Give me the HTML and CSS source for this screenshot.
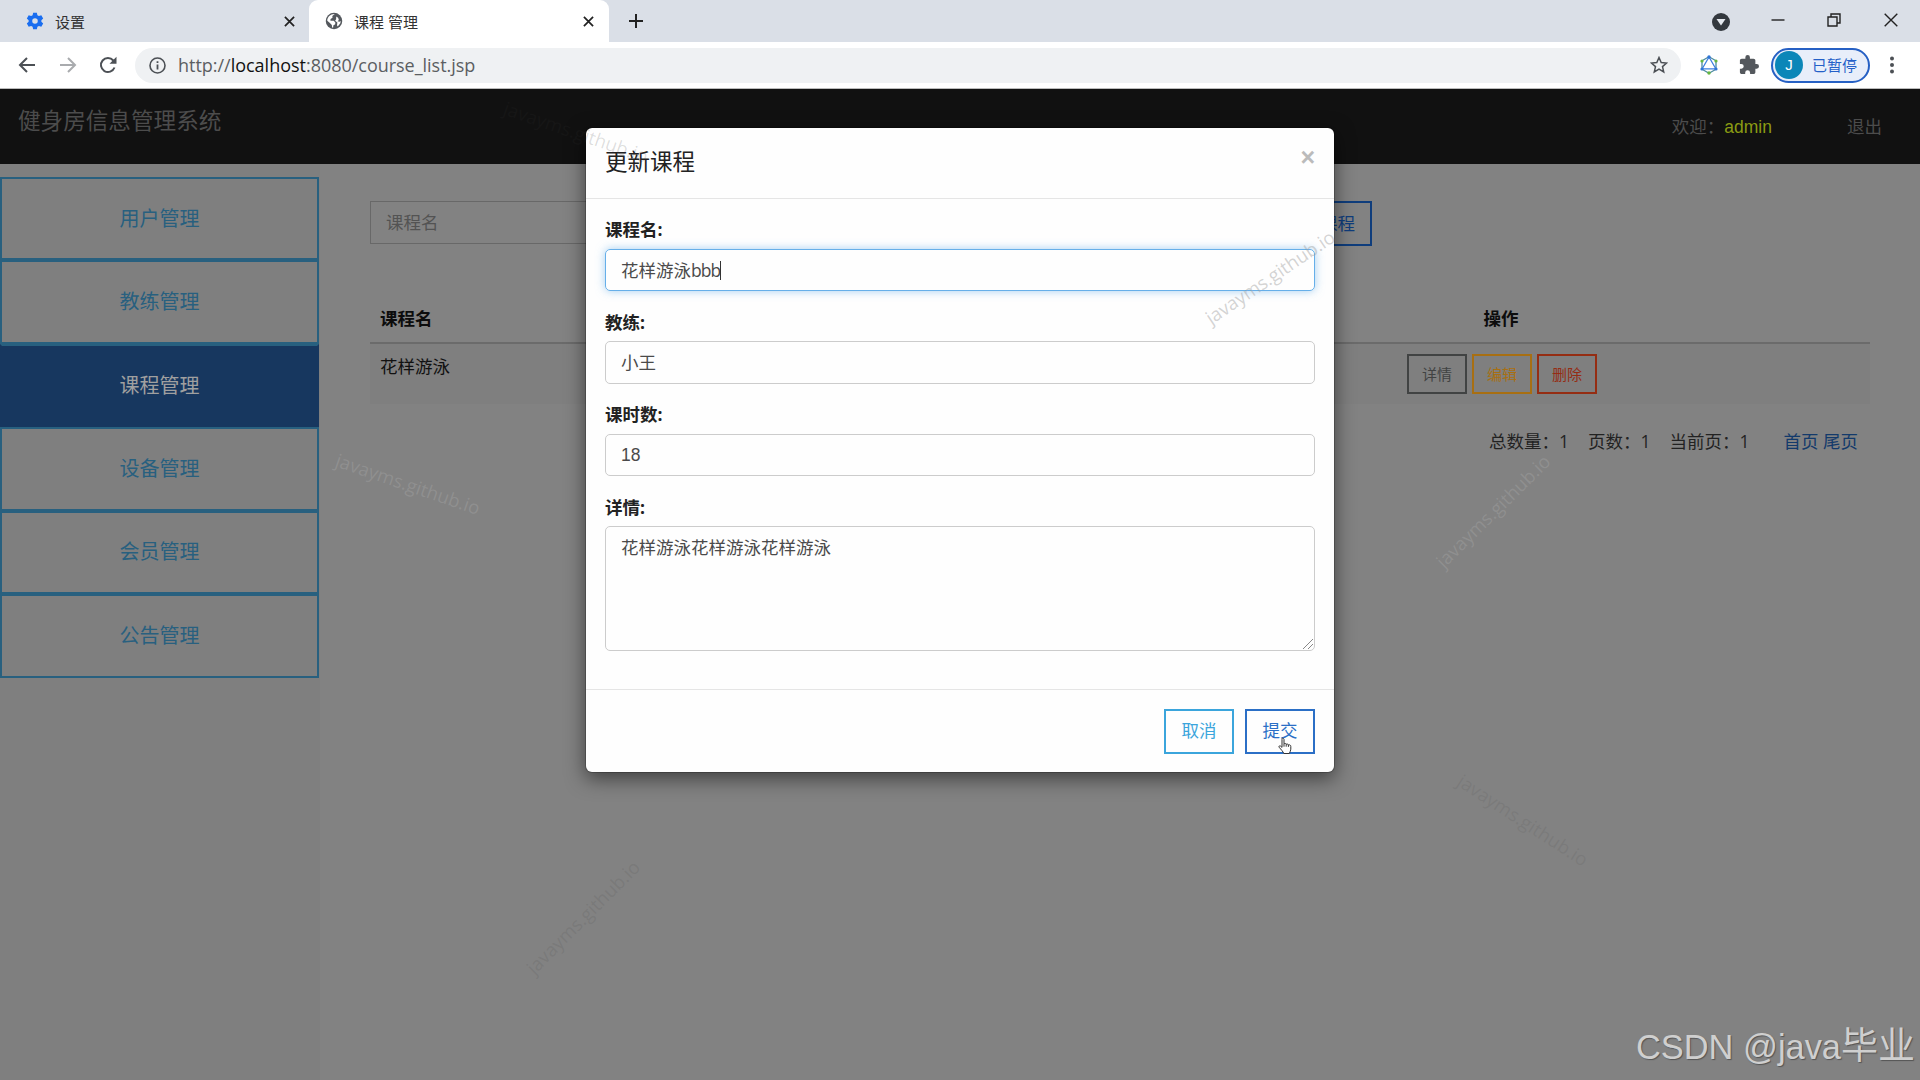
FILE: index.html
```html
<!DOCTYPE html>
<html lang="zh-CN">
<head>
<meta charset="utf-8">
<title>课程 管理</title>
<link rel="stylesheet" href="styles.css">
</head>
<body>
<div class="tabs">
  <div class="tab">
    <svg class="tab-icon" viewBox="0 0 24 24"><path fill="#1a6ef0" fill-rule="evenodd" d="M9.5 1h5l.7 3.2 2 1.2 3.2-1 2.5 4.300-2.400 2.200v2.200l2.400 2.200-2.500 4.300-3.200-1-2 1.200-.7 3.200h-5l-.7-3.200-2-1.200-3.200 1-2.500-4.300 2.400-2.200v-2.200L1.100 8.700l2.500-4.300 3.200 1 2-1.200zM12 8.300a3.700 3.700 0 1 0 0 7.400 3.700 3.700 0 0 0 0-7.400z"/></svg>
    <span class="tab-title">设置</span>
    <svg class="tab-close" viewBox="0 0 12 12"><path d="M1 1l10 10M11 1L1 11"/></svg>
  </div>
  <div class="tab active">
    <svg class="tab-icon" viewBox="0 0 24 24"><circle cx="12" cy="12" r="11" fill="#54585d"/><path fill="#fff" d="M13 2.800l-3.200 2.400.2 2.600-2.600 1.500-.2 2.200 4.400.2 2.200 2.400-.2 2.300-2.600 1.500v2.600l-1.500.4-.4-3.600-2.600-2.600L3 11.500C3 7 7.500 2.500 13 2.800zM15 6l2.500 1.500 1 3-1.800 1.700 2.600.8 1.700-1-.6 3-3.400 4.300-1-1.800.5-3.500-3-2.500 1.300-2z"/></svg>
    <span class="tab-title">课程 管理</span>
    <svg class="tab-close" viewBox="0 0 12 12"><path d="M1 1l10 10M11 1L1 11"/></svg>
  </div>
  <svg class="new-tab" viewBox="0 0 16 16"><path d="M8 1v14M1 8h14"/></svg>
  <div class="win">
    <svg width="18" height="18" viewBox="0 0 18 18"><circle cx="9" cy="9" r="9" fill="#33383e"/><path d="M4.500 6h9L9 12.500z" fill="#e4e8ee"/></svg>
    <svg class="w-min" width="14" height="14" viewBox="0 0 14 14"><path d="M.5 7h13" stroke="#222" stroke-width="1.400"/></svg>
    <svg class="w-max" width="14" height="14" viewBox="0 0 14 14"><path d="M1 4h9v9H1zM4 4V1h9v9h-3" fill="none" stroke="#222" stroke-width="1.400"/></svg>
    <svg class="w-x" width="14" height="14" viewBox="0 0 14 14"><path d="M.7.700l12.600 12.600M13.300.700L.7 13.300" stroke="#222" stroke-width="1.400"/></svg>
  </div>
</div>
<div class="toolbar">
  <svg class="nav" viewBox="0 0 18 18"><path d="M17 9H2M9 2L2 9l7 7"/></svg>
  <svg class="nav nav-fwd" viewBox="0 0 18 18"><path d="M1 9h15M9 2l7 7-7 7"/></svg>
  <svg class="nav nav-reload" viewBox="0 0 18 18"><path d="M15.500 11.500A7 7 0 1 1 14.300 4.500"/><path class="solid" d="M17.500.8v7h-7z"/></svg>
  <div class="omnibox">
    <svg width="17" height="17" viewBox="0 0 17 17"><circle cx="8.500" cy="8.500" r="7.500" fill="none" stroke="#4c5055" stroke-width="1.600"/><path d="M8.500 7.500v5M8.500 4.200v1.900" stroke="#4c5055" stroke-width="1.800"/></svg>
    <span class="url">http://<b>localhost</b>:8080/course_list.jsp</span>
    <svg class="star" width="18" height="18" viewBox="0 0 18 18"><path d="M9 1.500l2.200 5 5.400.5-4.100 3.600 1.200 5.300L9 13.100l-4.700 2.800 1.200-5.300L1.400 7l5.400-.5z" fill="none" stroke="#4c5055" stroke-width="1.500"/></svg>
  </div>
  <svg class="ext" width="20" height="20" viewBox="0 0 20 20"><path d="M10 1.800l7 4v8.400l-7 4-7-4V5.800z" fill="none" stroke="#4b8a9e" stroke-width="1.300"/><path d="M10 2l6.800 11.800H3.200z" fill="none" stroke="#3d7fe0" stroke-width="1.300"/><g fill="#2f75d6"><circle cx="10" cy="2" r="1.700"/><circle cx="3" cy="14" r="1.600"/><circle cx="17" cy="14" r="1.600"/></g><g fill="#65b741"><circle cx="3" cy="6" r="1.600"/><circle cx="17" cy="6" r="1.600"/><circle cx="10" cy="18" r="1.700"/></g></svg>
  <svg class="puzzle" width="20" height="20" viewBox="1 1 22 22"><path fill="#54585d" d="M20.500 11H19V7c0-1.100-.9-2-2-2h-4V3.500a2.500 2.500 0 0 0-5 0V5H4c-1.100 0-2 .9-2 2v3.800h1.500a2.700 2.700 0 0 1 0 5.400H2V20c0 1.100.9 2 2 2h3.800v-1.500a2.700 2.700 0 0 1 5.400 0V22H17c1.100 0 2-.9 2-2v-4h1.500a2.500 2.500 0 0 0 0-5z"/></svg>
  <div class="profile"><span class="avatar">J</span><span>已暂停</span></div>
  <svg class="dots" width="6" height="18" viewBox="0 0 6 18"><g fill="#4c5055"><circle cx="3" cy="2.500" r="2"/><circle cx="3" cy="9" r="2"/><circle cx="3" cy="15.500" r="2"/></g></svg>
</div>
<div class="header">
  <span class="brand">健身房信息管理系统</span>
  <span class="welcome">欢迎：<em>admin</em></span>
  <span class="logout">退出</span>
</div>
<div class="page">
  <div class="side">
    <div class="item">用户管理</div>
    <div class="item">教练管理</div>
    <div class="item on">课程管理</div>
    <div class="item">设备管理</div>
    <div class="item">会员管理</div>
    <div class="item">公告管理</div>
  </div>
  <div class="main">
    <div class="search"><div class="query">课程名</div><div class="add">添加课程</div></div>
    <div class="row head"><span>课程名</span><span class="op">操作</span></div>
    <div class="row body"><span>花样游泳</span>
      <div class="ops"><i class="b-info">详情</i><i class="b-edit">编辑</i><i class="b-del">删除</i></div>
    </div>
    <div class="pager"><span class="p-total">总数量：1</span><span class="p-pages">页数：1</span><span class="p-cur">当前页：1</span><span class="p-link">首页 尾页</span></div>
  </div>
</div>

<div class="modal">
  <div class="m-head"><span class="m-title">更新课程</span><span class="m-x">×</span></div>
  <div class="m-body">
    <label>课程名:</label><div class="field focus">花样游泳<span class="latin">bbb</span><span class="caret"></span></div>
    <label>教练:</label><div class="field">小王</div>
    <label>课时数:</label><div class="field num">18</div>
    <label>详情:</label><div class="field area">花样游泳花样游泳花样游泳
      <svg class="grip" width="12" height="12" viewBox="0 0 12 12"><path d="M1 11L11 1M6 11l5-5" stroke="#888" stroke-width="1"/></svg></div>
  </div>
  <div class="m-foot"><span class="btn cancel">取消</span><span class="btn submit">提交</span></div>
</div>

<svg class="cursor" width="15" height="18" viewBox="0 0 15 18"><path d="M4.500 1.200c1 0 1.500.6 1.500 1.500v4c.8-.5 1.900-.3 2.200.5.900-.4 1.900-.1 2.200.7 1.300-.4 2.400.2 2.400 1.500v2.800c0 1.700-1 2.500-1.400 4.300H5.800C5 14.500 3 12.500 1.200 10.300c-.8-1 .4-2 1.400-1.200L4 10.400V2.700c0-.9 0-1.500.5-1.500zM6 6.700v3M8.200 7.200v2.500M10.400 7.900v2" fill="#fff" stroke="#333" stroke-width="1"/></svg>

<span class="mark k1">javayms.github.io</span>
<span class="mark k2">javayms.github.io</span>
<span class="mark k3">javayms.github.io</span>
<span class="mark k4">javayms.github.io</span>
<span class="mark k5">javayms.github.io</span>
<span class="mark k6">javayms.github.io</span>
<span class="csdn">CSDN @java<span>毕业</span></span>
</body>
</html>
```
FILE: styles.css
```css
* { box-sizing: border-box; }
body { margin: 0; width: 1920px; height: 1080px; overflow: hidden; position: relative; display: flex; flex-direction: column; background: #828282; font-family: "Open Sans", "Noto Sans CJK SC", sans-serif; font-size: 17.5px; line-height: 24px; color: #111; }
svg { display: block; flex: none; }

.tabs { height: 42px; flex: none; display: flex; align-items: center; background: #dadfe7; }
.tab { height: 42px; display: flex; align-items: center; padding-left: 26px; width: 309px; }
.tab.active { width: 300px; background: #fff; border-radius: 9px 9px 0 0; }
.tab-icon { width: 18px; height: 18px; }
.active .tab-icon { margin-left: -10px; }
.tab-title { margin-left: 11px; font-size: 15px; color: #333; padding-top: 2px; }
.tab-close { width: 11px; height: 11px; margin-left: auto; margin-right: 14px; }
.active .tab-close { margin-right: 15px; }
.tab-close path { stroke: #222; stroke-width: 1.9; }
.new-tab { width: 16px; height: 16px; margin-left: 19px; }
.new-tab path { stroke: #222; stroke-width: 2; }
.win { display: flex; align-items: center; margin-left: auto; margin-right: 22px; height: 37px; }
.win > svg:first-child { margin-top: 4px; }
.w-min { margin-left: 41px; }
.w-max { margin-left: 42px; }
.w-x { margin-left: 43px; }

.tabs .win { margin-bottom: 3px; }
.toolbar { height: 47px; flex: none; display: flex; align-items: center; background: #fff; padding-left: 18px; border-bottom: 1px solid #bbb; }
.nav { width: 18px; height: 18px; fill: none; stroke: #4c5055; stroke-width: 2; }
.nav .solid { fill: #4c5055; stroke: none; }
.nav-fwd { margin-left: 23px; stroke: #a9abae; }
.nav-reload { margin-left: 22px; }
.omnibox { width: 1546px; height: 35px; margin-left: 18px; border-radius: 18px; background: #eff1f3; display: flex; align-items: center; padding: 0 13px 0 14px; }
.url { margin-left: 12px; font-size: 18px; color: #5b5e62; letter-spacing: -0.02px; white-space: nowrap; }
.url b { font-weight: 400; color: #111; }
.star { margin-left: auto; }
.ext { margin-left: 18px; }
.puzzle { margin-left: 20px; }
.profile { margin-left: 12px; width: 99px; height: 35px; border: 2px solid #2660c4; border-radius: 18px; background: #e8eefa; display: flex; align-items: center; padding-left: 2px; gap: 9px; font-size: 15px; color: #2460c8; white-space: nowrap; }
.avatar { width: 28px; height: 28px; border-radius: 50%; background: #0b86b8; color: #fff; text-align: center; font: 15px/28px "Liberation Sans", sans-serif; }
.dots { margin-left: 19px; }

.header { height: 75px; flex: none; background: #111; display: flex; align-items: flex-start; color: #4c4c4c; padding: 19px 38px 0 18px; }
.brand { font-size: 22.6px; line-height: 26px; }
.welcome { margin-left: auto; padding-top: 6px; }
.welcome em { font-style: normal; color: #8b9b13; font-family: "Liberation Sans", sans-serif; }
.logout { margin-left: 75px; padding-top: 6px; }

.page { flex: 1; display: flex; }
.side { width: 320px; background: #7f7f7f; padding-top: 13px; }
.item { width: 319px; height: 83.45px; border: 2.5px solid #28607f; display: flex; align-items: center; justify-content: center; font-size: 20px; color: #28607f; }
.item.on { background: #17375f; border-color: #17375f; border-top-color: #28607f; color: #a0a0a0; }

.main { width: 1500px; margin-left: 50px; padding-top: 37px; }
.search { display: flex; justify-content: space-between; width: 1002px; height: 45px; }
.query { width: 500px; height: 43px; border: 1px solid #686868; padding: 8px 15px; color: #535353; }
.add { width: 104px; height: 45px; border: 2.5px solid #0f3d7c; color: #0f3d7c; padding: 8px 15px; white-space: nowrap; }
.row { display: flex; padding: 0 10px; }
.head { height: 98px; padding-top: 60px; font-weight: 700; border-bottom: 2px solid #6b6b6b; color: #0c0c0c; }
.op { margin-left: 1051px; }
.body { height: 60px; background: #7f7f7f; padding-top: 10px; }
.ops { display: flex; gap: 5px; margin-left: 957px; }
.ops i { width: 60px; height: 40px; border: 2px solid; font-style: normal; font-size: 15px; display: flex; align-items: center; justify-content: center; }
.b-info { color: #414343; }
.b-edit { color: #a86f12; }
.b-del { color: #952d13; }
.pager { display: flex; padding: 25px 12px 0 0; justify-content: flex-end; color: #222; }
.p-pages, .p-cur { margin-left: 19px; }
.p-link { margin-left: 34px; color: #133a6b; }

.modal { position: absolute; left: 585px; top: 127px; width: 750px; height: 646px; background: #fefefe; border-radius: 7px; border: 1px solid rgba(0, 0, 0, .2); background-clip: padding-box; box-shadow: 0 6px 19px rgba(0, 0, 0, .5); display: flex; flex-direction: column; }
.m-head { height: 71px; border-bottom: 1px solid #e5e5e5; display: flex; justify-content: space-between; padding: 20px 19px 0; }
.m-title { font-size: 22.5px; line-height: 28px; color: #222; }
.m-x { font: 700 25px/16px "Liberation Sans", sans-serif; color: #bbb; margin-top: 1px; }
.m-body { padding: 18px 19px 0; height: 490px; }
.m-body label { display: block; height: 31.5px; font-weight: 700; color: #222; line-height: 25px; }
.field { height: 42.500px; border: 1px solid #ccc; border-radius: 5px; margin-bottom: 18.500px; padding: 0 15px; line-height: 41px; color: #4a4a4a; position: relative; white-space: nowrap; }
.focus { border-color: #66afe9; box-shadow: 0 0 10px rgba(102, 175, 233, .6); }
.latin { letter-spacing: -1px; }
.caret { display: inline-block; width: 1px; height: 19px; background: #333; vertical-align: -3px; }
.num { font-family: "Liberation Sans", sans-serif; }
.area { height: 125px; line-height: 25px; padding-top: 8px; }
.grip { position: absolute; right: 0; bottom: 0; }
.m-foot { flex: 1; border-top: 1px solid #e5e5e5; display: flex; justify-content: flex-end; gap: 11px; padding: 19px 19px 0; }
.btn { width: 70px; height: 45px; border: 2.5px solid; line-height: 39px; text-align: center; }
.cancel { color: #3ba5dc; }
.submit { color: #2b6fc6; }
.cursor { position: absolute; left: 1278px; top: 737px; }

.mark { position: absolute; width: 160px; height: 26px; margin: -13px 0 0 -80px; text-align: center; white-space: nowrap; font-size: 18.6px; line-height: 26px; color: rgba(160, 160, 160, .45); }
.k1 { left: 408px; top: 484px; transform: rotate(19deg); }
.k2 { left: 1270px; top: 277px; transform: rotate(-34deg); }
.k3 { left: 1493px; top: 511px; transform: rotate(-44.500deg); }
.k4 { left: 1523px; top: 820px; transform: rotate(33deg); color: rgba(105, 105, 105, .28); }
.k5 { left: 583px; top: 917px; transform: rotate(-45deg); color: rgba(105, 105, 105, .32); }
.k6 { left: 576px; top: 132px; transform: rotate(19deg); color: rgba(50, 50, 50, .16); }
.csdn { position: absolute; left: 1636px; top: 1024px; font: 34.400px/46px "Liberation Sans", "Noto Sans CJK SC", sans-serif; color: #cfcfcf; text-shadow: 1px 1px 1px #555; white-space: nowrap; }
.csdn span { font-size: 37px; }
```
